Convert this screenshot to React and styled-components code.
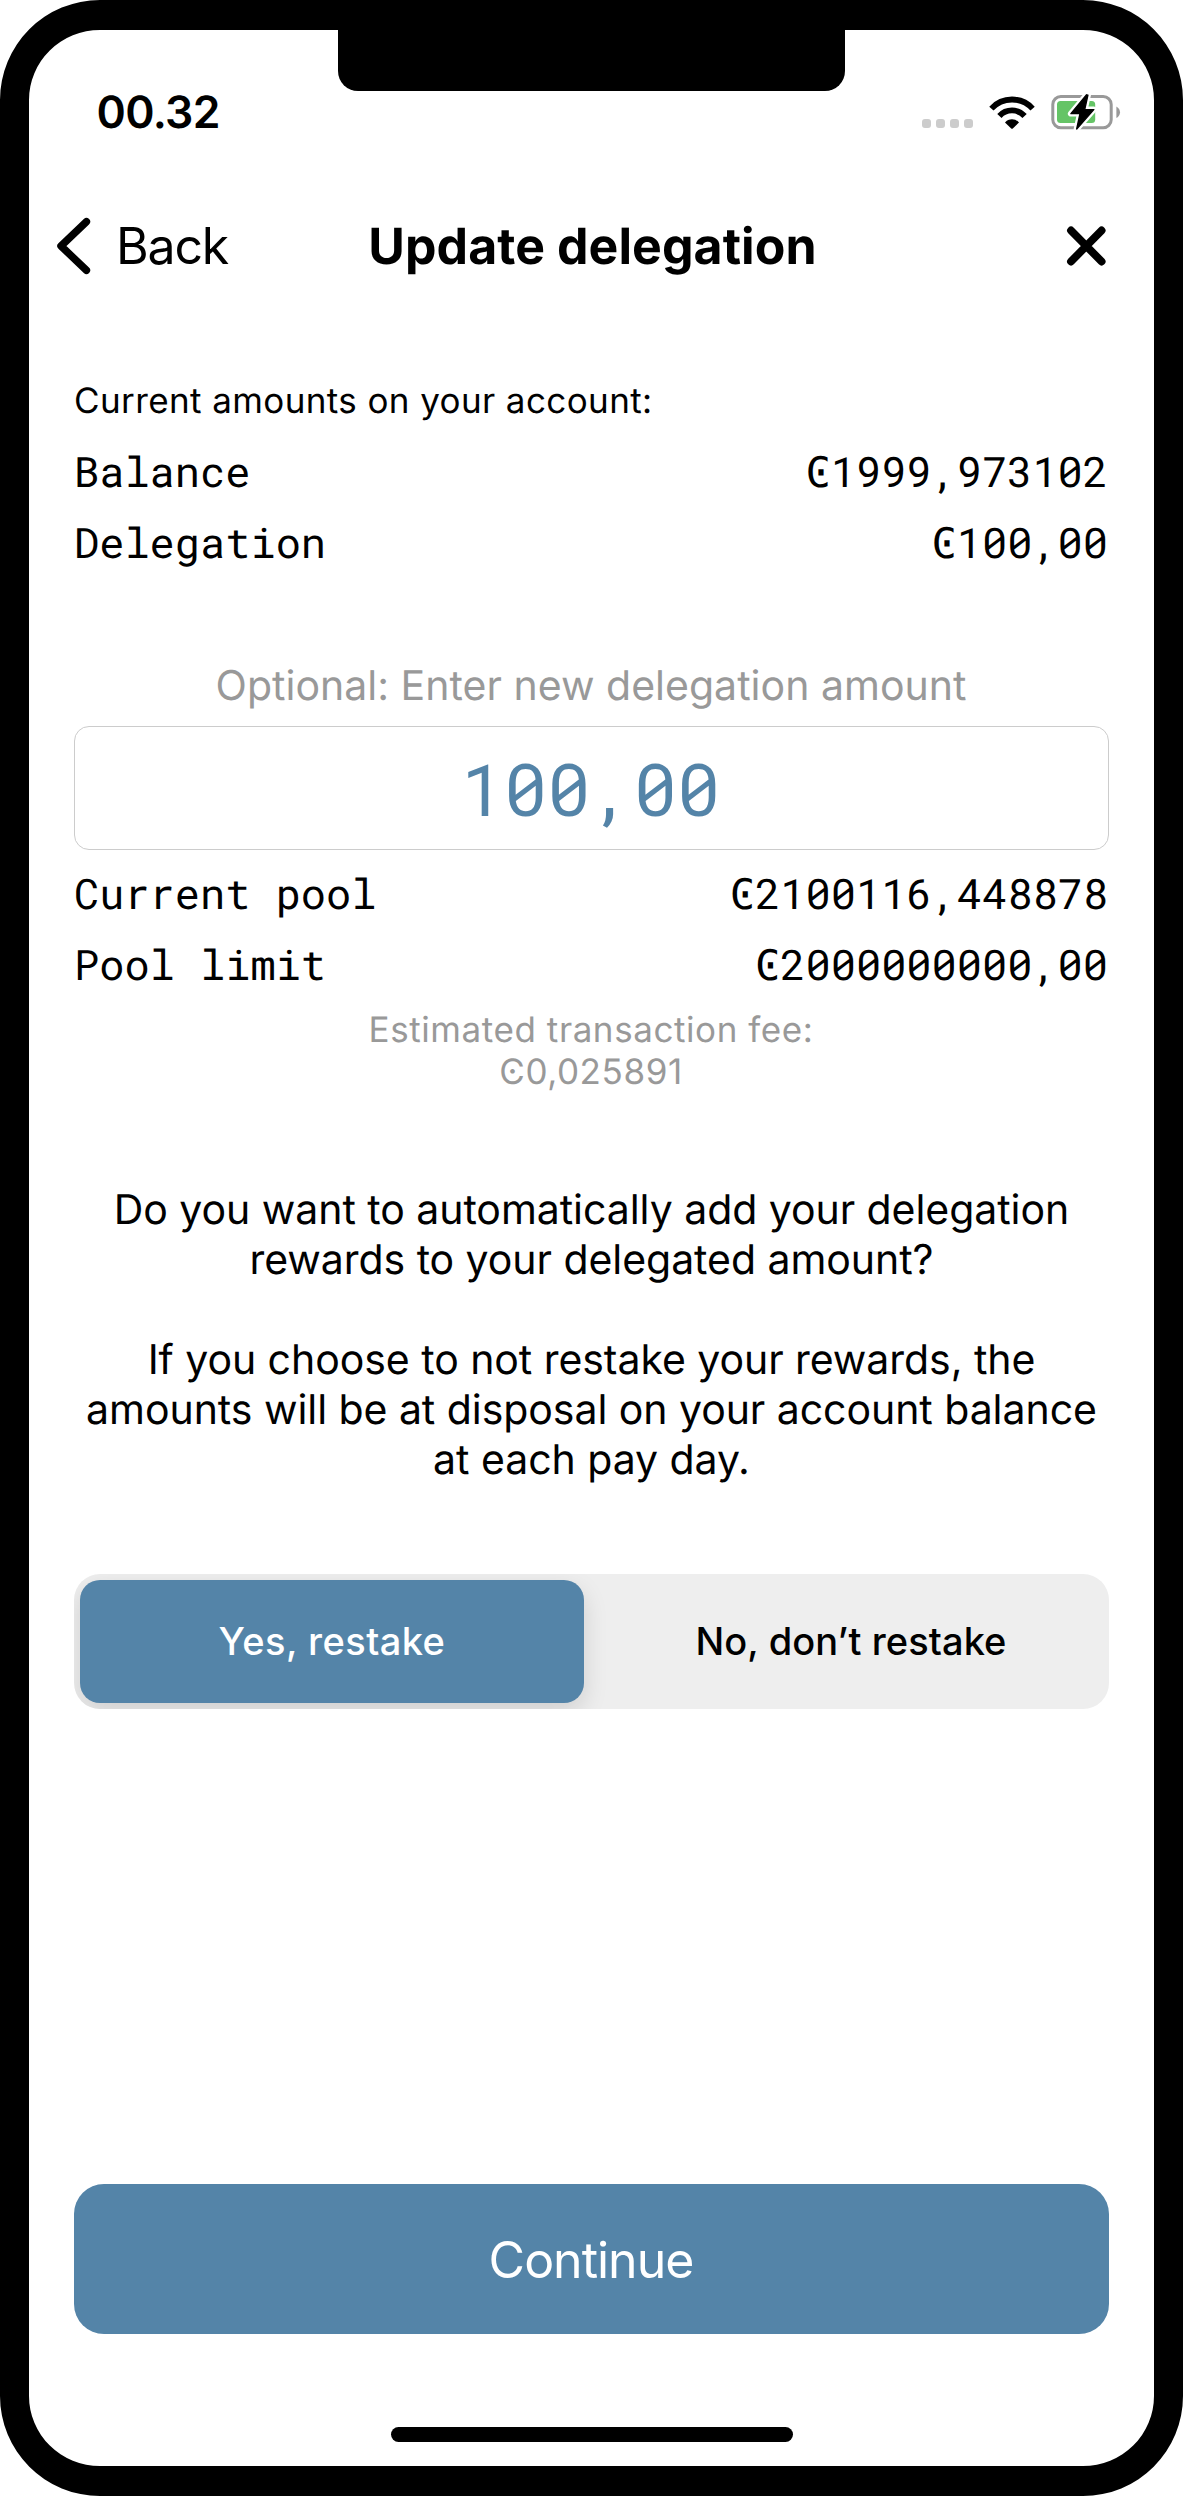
import React, { useState } from 'react';
import styled, { createGlobalStyle } from 'styled-components';

const accent = '#5484a8';
const sans = 'Inter, "DejaVu Sans", sans-serif';
const mono = '"Roboto Mono", "DejaVu Sans Mono", monospace';

const GlobalStyle = createGlobalStyle`
  * { box-sizing: border-box; }
  body { margin: 0; background: #fff; color: #000; font-family: ${sans}; text-rendering: geometricPrecision; }
  button, input { font: inherit; color: inherit; border: 0; background: none; padding: 0; margin: 0; }
`;

const Phone = styled.main`
  position: relative;
  display: flex;
  flex-direction: column;
  width: 1183px;
  height: 2496px;
  border: solid #000;
  border-width: 30px 29px;
  border-radius: 100px;
  background: #fff;
`;

const Notch = styled.div`
  position: absolute;
  top: -1px;
  left: 309px;
  width: 507px;
  height: 62px;
  border-radius: 0 0 20px 20px;
  background: #000;
`;

const StatusBar = styled.div`
  display: flex;
  align-items: center;
  justify-content: space-between;
  height: 164px;
  padding: 0 33px 0 67.5px;
`;

const Time = styled.span`
  font-size: 44.5px;
  font-weight: 600;
  letter-spacing: -0.65px;
`;

const StatusIcons = styled.div`
  display: flex;
  align-items: center;
`;

const SignalDots = styled.div`
  display: flex;
  gap: 5px;
  margin: 23px 16px 0 0;
`;

const Dot = styled.i`
  width: 9px;
  height: 9px;
  border-radius: 3px;
  background: #ccc;
`;

const WifiIcon = styled.svg`
  width: 46px;
  height: 33px;
  margin-right: 15px;
`;

const BatteryIcon = styled.svg`
  width: 71px;
  height: 38px;
`;

const Header = styled.header`
  display: grid;
  grid-template-columns: 1fr auto 1fr;
  align-items: center;
  height: 104px;
  padding: 0 47px 0 27px;
`;

const BackButton = styled.button`
  display: flex;
  align-items: center;
  gap: 25px;
  font-size: 50px;
  line-height: 60px;
  letter-spacing: -1.2px;
`;

const Title = styled.h1`
  margin: 0 -19px 0 3px;
  padding-top: 1px;
  font-size: 50px;
  line-height: 60px;
  font-weight: 700;
  letter-spacing: 0.08px;
`;

const CloseButton = styled.button`
  display: flex;
  justify-self: end;
`;

const Content = styled.section`
  display: flex;
  flex: 1;
  flex-direction: column;
  padding: 81px 45px 93px;
`;

const Caption = styled.p`
  margin: 0 0 12px;
  font-size: 35px;
  line-height: 44px;
  letter-spacing: 0.4px;
`;

const Rows = styled.dl`
  display: flex;
  flex-direction: column;
  margin: 0;
`;

const Row = styled.div`
  display: flex;
  justify-content: space-between;
  height: 71px;
  padding: 1px 1px 0 0;
  font-family: ${mono};
  font-size: 42px;
  line-height: 71px;

  dt, dd { margin: 0; }
`;

const AmountLabel = styled.label`
  margin-top: 83px;
  padding-right: 1px;
  color: #999;
  font-size: 41px;
  line-height: 50px;
  letter-spacing: 0.02px;
  text-align: center;
`;

const AmountInput = styled.input`
  height: 124px;
  width: 100%;
  margin: 16px 0 7px;
  padding-right: 2px;
  border: 1px solid #ccc;
  border-radius: 15px;
  color: ${accent};
  font-family: ${mono};
  font-size: 72px;
  text-align: center;
`;

const Fee = styled.p`
  margin: 10px 0 0;
  padding-right: 1px;
  color: #999;
  font-size: 35px;
  line-height: 42px;
  letter-spacing: 0.58px;
  text-align: center;
`;

const Explanation = styled.div`
  margin: 91px -10px 0;
  font-size: 41px;
  line-height: 50px;
  letter-spacing: -0.05px;
  text-align: center;

  p { margin: 0; }
  p + p { margin-top: 50px; }
`;

const Segmented = styled.div`
  display: grid;
  grid-template-columns: 1fr 1fr;
  gap: 15px;
  height: 135px;
  margin-top: 90px;
  padding: 6px;
  overflow: hidden;
  border-radius: 26px;
  background: #eee;
`;

const Segment = styled.button`
  padding-bottom: 2px;
  border-radius: 20px;
  background: ${p => (p.$active ? accent : 'transparent')};
  box-shadow: ${p => (p.$active ? '0 9px 24px rgba(0, 0, 0, 0.13)' : 'none')};
  color: ${p => (p.$active ? '#fff' : '#000')};
  font-size: 38px;
  font-weight: 500;
  letter-spacing: ${p => (p.$active ? '0.45px' : '0.08px')};
`;

const ContinueButton = styled.button`
  height: 150px;
  margin-top: auto;
  padding: 2px 1px 0 0;
  border-radius: 30px;
  background: ${accent};
  color: #fff;
  font-size: 50px;
  letter-spacing: -1px;
`;

const HomeIndicator = styled.div`
  align-self: center;
  width: 402px;
  height: 15px;
  margin-bottom: 24px;
  border-radius: 8px;
  background: #000;
`;

const BOLT = 'M36.6 1.8 L20.9 20.6 H30 L26.7 36 L43.8 16.6 H34.7 L37.9 2.2 Z';

function Battery() {
  return (
    <BatteryIcon viewBox="0 0 71 38" fill="none">
      <rect x="2.8" y="3.5" width="58.4" height="31.2" rx="8" stroke="#999" strokeWidth="3" />
      <path d="M66.4 13.4 C71.2 16 71.2 22.4 66.4 25 Z" fill="#999" />
      <rect x="7" y="8" width="38.2" height="22" rx="3.5" fill="#65c466" />
      <path d={BOLT} fill="#fff" stroke="#fff" strokeWidth="6" strokeLinejoin="round" />
      <path d={BOLT} fill="#000" stroke="#000" strokeWidth="1.4" strokeLinejoin="round" />
    </BatteryIcon>
  );
}

function Wifi() {
  return (
    <WifiIcon viewBox="0 0 46 33" fill="none" stroke="#000" strokeWidth="5.8">
      <path d="M2.4 12.6 A27.9 27.9 0 0 1 43.6 12.6" />
      <path d="M10.4 20 A17.1 17.1 0 0 1 35.6 20" />
      <path d="M16 26.4 A9.3 9.3 0 0 1 30 26.4 L23.8 32.5 Q23 33.2 22.2 32.5 Z" fill="#000" stroke="none" />
    </WifiIcon>
  );
}

const account = [['Balance', 'Ͼ1999,973102'], ['Delegation', 'Ͼ100,00']];
const pool = [['Current pool', 'Ͼ2100116,448878'], ['Pool limit', 'Ͼ2000000000,00']];

function Amounts({ rows }) {
  return (
    <Rows>
      {rows.map(([name, value]) => (
        <Row key={name}>
          <dt>{name}</dt>
          <dd>{value}</dd>
        </Row>
      ))}
    </Rows>
  );
}

export default function App() {
  const [restake, setRestake] = useState(true);
  const [amount, setAmount] = useState('100,00');

  return (
    <>
      <GlobalStyle />
      <Phone>
        <Notch />
        <StatusBar>
          <Time>00.32</Time>
          <StatusIcons>
            <SignalDots><Dot /><Dot /><Dot /><Dot /></SignalDots>
            <Wifi />
            <Battery />
          </StatusIcons>
        </StatusBar>
        <Header>
          <BackButton>
            <svg width="35" height="58" viewBox="0 0 35 58" fill="none" stroke="#000" strokeWidth="7.5" strokeLinecap="round" strokeLinejoin="round">
              <path d="M30.4 4.7 L5 29 L30.4 53.3" />
            </svg>
            Back
          </BackButton>
          <Title>Update delegation</Title>
          <CloseButton aria-label="Close">
            <svg width="41" height="40" viewBox="0 0 41 40" fill="none" stroke="#000" strokeWidth="7.8" strokeLinecap="round">
              <path d="M5 4.5 L35.6 35.5 M35.6 4.5 L5 35.5" />
            </svg>
          </CloseButton>
        </Header>
        <Content>
          <Caption>Current amounts on your account:</Caption>
          <Amounts rows={account} />
          <AmountLabel htmlFor="amount">Optional: Enter new delegation amount</AmountLabel>
          <AmountInput id="amount" value={amount} onChange={e => setAmount(e.target.value)} />
          <Amounts rows={pool} />
          <Fee>
            Estimated transaction fee:
            <br />
            Ͼ0,025891
          </Fee>
          <Explanation>
            <p>
              Do you want to automatically add your delegation
              <br />
              rewards to your delegated amount?
            </p>
            <p>
              If you choose to not restake your rewards, the
              <br />
              amounts will be at disposal on your account balance
              <br />
              at each pay day.
            </p>
          </Explanation>
          <Segmented>
            <Segment $active={restake} onClick={() => setRestake(true)}>Yes, restake</Segment>
            <Segment $active={!restake} onClick={() => setRestake(false)}>No, don’t restake</Segment>
          </Segmented>
          <ContinueButton>Continue</ContinueButton>
        </Content>
        <HomeIndicator />
      </Phone>
    </>
  );
}
